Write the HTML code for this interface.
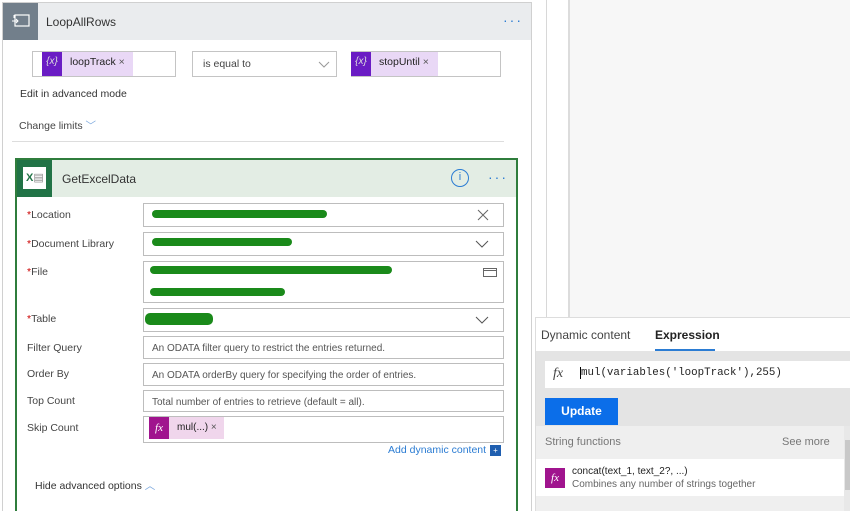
<!DOCTYPE html>
<html><head><style>
*{box-sizing:border-box;margin:0;padding:0}
body{width:850px;height:511px;overflow:hidden;background:#fff;font-family:"Liberation Sans",sans-serif;font-size:11px;color:#333;position:relative}
.a{position:absolute}
.inp{position:absolute;left:143px;width:361px;border:1px solid #bdbdbd;background:#fff;font-size:10px;color:#555;padding:6px 8px}
.lbl{position:absolute;left:27px;font-size:10.5px;color:#444}
.req{color:#c00}
.scr{position:absolute;height:8px;background:#1a8a1a;border-radius:5px}
</style></head><body>
<div class="a" style="left:532px;top:0;width:14px;height:511px;background:#fff"></div>
<div class="a" style="left:546px;top:0;width:1px;height:320px;background:#d8d8d8"></div>
<div class="a" style="left:568px;top:0;width:2px;height:320px;background:#dcdcdc"></div>
<div class="a" style="left:570px;top:0;width:280px;height:318px;background:#f7f7f7"></div>
<div class="a" style="left:2px;top:2px;width:530px;height:509px;border:1px solid #d0d0d0;border-bottom:none;background:#fff"></div>
<div class="a" style="left:3px;top:3px;width:528px;height:37px;background:#eaecee"></div>
<div class="a" style="left:3px;top:3px;width:35px;height:37px;background:#727f8b"></div>
<svg class="a" style="left:11px;top:13px" width="20" height="16"><rect x="4" y="2" width="14" height="11" fill="none" stroke="#fff" stroke-width="1.2"/><path d="M1 8h6M5 6l2 2-2 2M3 2v3" stroke="#fff" fill="none"/></svg>
<div class="a" style="left:46px;top:15px;font-size:12px;color:#333">LoopAllRows</div>
<div class="a" style="left:503px;top:12px;color:#2b7cd3;font-size:14px;letter-spacing:2px">···</div>
<div class="a" style="left:32px;top:51px;width:144px;height:26px;border:1px solid #c4c4c4"></div>
<div class="a" style="left:42px;top:52px;width:20px;height:24px;background:#6a1cc4;color:#ddd;font-size:10px;text-align:center;line-height:20px;font-style:italic">{x}</div>
<div class="a" style="left:62px;top:52px;width:71px;height:24px;background:#e9d8f6;font-size:10.5px;line-height:20px;padding-left:8px;color:#222">loopTrack <span style="color:#555">×</span></div>
<div class="a" style="left:192px;top:51px;width:145px;height:26px;border:1px solid #c4c4c4;font-size:10.5px;padding:6px 10px;color:#444">is equal to<svg style="position:absolute;right:6px;top:9px" width="12" height="8"><path d="M1 1l5 5 5-5" stroke="#999" fill="none"/></svg></div>
<div class="a" style="left:351px;top:51px;width:150px;height:26px;border:1px solid #c4c4c4"></div>
<div class="a" style="left:351px;top:52px;width:20px;height:24px;background:#6a1cc4;color:#ddd;font-size:10px;text-align:center;line-height:20px;font-style:italic">{x}</div>
<div class="a" style="left:371px;top:52px;width:67px;height:24px;background:#e9d8f6;font-size:10.5px;line-height:20px;padding-left:8px;color:#222">stopUntil <span style="color:#555">×</span></div>
<div class="a" style="left:20px;top:88px;font-size:10.5px;color:#333">Edit in advanced mode</div>
<div class="a" style="left:19px;top:118px;font-size:10.5px;color:#444">Change limits <span style="color:#7aa7dd">﹀</span></div>
<div class="a" style="left:12px;top:141px;width:492px;height:1px;background:#ddd"></div>
<div class="a" style="left:15px;top:158px;width:503px;height:353px;border:2px solid #2f7d3c;border-bottom:none;background:#fff"></div>
<div class="a" style="left:17px;top:160px;width:499px;height:37px;background:#e3ede4"></div>
<div class="a" style="left:17px;top:160px;width:35px;height:37px;background:#217346"></div>
<div class="a" style="left:23px;top:167px;width:23px;height:22px;background:#fff;color:#217346;font-size:11px;font-weight:bold;padding:4px 0 0 3px">X<span style="font-weight:normal;color:#888">▤</span></div>
<div class="a" style="left:62px;top:172px;font-size:12px;color:#333">GetExcelData</div>
<div class="a" style="left:451px;top:169px;width:18px;height:18px;border:1.5px solid #2b7cd3;border-radius:50%;color:#2b7cd3;font-size:11px;text-align:center;line-height:15px">i</div>
<div class="a" style="left:488px;top:169px;color:#2b7cd3;font-size:14px;letter-spacing:2px">···</div>
<div class="lbl" style="top:209px"><span class="req">*</span>Location</div>
<div class="inp" style="top:203px;height:24px"><svg style="position:absolute;right:14px;top:5px" width="12" height="12"><path d="M1 1l10 10M11 1L1 11" stroke="#666"/></svg></div>
<div class="scr" style="left:152px;top:210px;width:175px"></div>
<div class="lbl" style="top:238px"><span class="req">*</span>Document Library</div>
<div class="inp" style="top:232px;height:24px"><svg style="position:absolute;right:14px;top:7px" width="14" height="8"><path d="M1 1l6 6 6-6" stroke="#555" fill="none"/></svg></div>
<div class="scr" style="left:152px;top:238px;width:140px"></div>
<div class="lbl" style="top:266px"><span class="req">*</span>File</div>
<div class="inp" style="top:261px;height:42px"><svg style="position:absolute;right:6px;top:5px" width="14" height="10"><rect x="0.5" y="1.5" width="13" height="8" fill="none" stroke="#666"/><path d="M0.5 3.5h13" stroke="#666"/></svg></div>
<div class="scr" style="left:150px;top:266px;width:242px"></div>
<div class="scr" style="left:150px;top:288px;width:135px"></div>
<div class="lbl" style="top:313px"><span class="req">*</span>Table</div>
<div class="inp" style="top:308px;height:24px"><svg style="position:absolute;right:14px;top:7px" width="14" height="8"><path d="M1 1l6 6 6-6" stroke="#555" fill="none"/></svg></div>
<div class="scr" style="left:145px;top:313px;width:68px;height:12px"></div>
<div class="lbl" style="top:342px">Filter Query</div>
<div class="inp" style="top:336px;height:23px">An ODATA filter query to restrict the entries returned.</div>
<div class="lbl" style="top:368px">Order By</div>
<div class="inp" style="top:363px;height:23px">An ODATA orderBy query for specifying the order of entries.</div>
<div class="lbl" style="top:395px">Top Count</div>
<div class="inp" style="top:390px;height:22px">Total number of entries to retrieve (default = all).</div>
<div class="lbl" style="top:422px">Skip Count</div>
<div class="inp" style="top:416px;height:27px;padding:0"></div>
<div class="a" style="left:149px;top:417px;width:20px;height:22px;background:#a0148e;color:#fff;font-family:'Liberation Serif',serif;font-style:italic;font-size:11px;text-align:center;line-height:22px">fx</div>
<div class="a" style="left:169px;top:417px;width:55px;height:22px;background:#f0d6ec;font-size:10px;line-height:22px;padding-left:8px;color:#222">mul(...) <span style="color:#555">×</span></div>
<div class="a" style="left:388px;top:444px;font-size:10.5px;color:#2b7cd3">Add dynamic content</div>
<div class="a" style="left:490px;top:445px;width:11px;height:11px;background:#1f5fb0;color:#fff;font-size:8px;text-align:center;line-height:11px">+</div>
<div class="a" style="left:35px;top:478px;font-size:10.5px;color:#333">Hide advanced options <span style="color:#7aa7dd">︿</span></div>
<div class="a" style="left:535px;top:317px;width:315px;height:194px;background:#fff;border-left:1px solid #ddd;border-top:1px solid #ddd"></div>
<div class="a" style="left:541px;top:328px;font-size:12px;color:#444">Dynamic content</div>
<div class="a" style="left:655px;top:328px;font-size:12px;color:#222;font-weight:bold">Expression</div>
<div class="a" style="left:655px;top:349px;width:60px;height:2px;background:#2b7cd3"></div>
<div class="a" style="left:536px;top:351px;width:314px;height:75px;background:#e4e4e4"></div>
<div class="a" style="left:545px;top:361px;width:305px;height:27px;background:#fff"></div>
<div class="a" style="left:553px;top:366px;font-family:'Liberation Serif',serif;font-style:italic;font-size:14px;color:#444">fx</div>
<div class="a" style="left:580px;top:367px;font-family:'Liberation Mono',monospace;font-size:10.8px;color:#222;border-left:1px solid #000">mul(variables('loopTrack'),255)</div>
<div class="a" style="left:545px;top:398px;width:73px;height:27px;background:#0b6ee9;color:#fff;font-size:12px;font-weight:bold;text-align:center;line-height:27px">Update</div>
<div class="a" style="left:536px;top:426px;width:308px;height:33px;background:#efefef"></div>
<div class="a" style="left:545px;top:436px;font-size:11px;color:#777">String functions</div>
<div class="a" style="left:782px;top:436px;font-size:11px;color:#777">See more</div>
<div class="a" style="left:545px;top:468px;width:20px;height:20px;background:#a0148e;color:#fff;font-family:'Liberation Serif',serif;font-style:italic;font-size:11px;text-align:center;line-height:20px">fx</div>
<div class="a" style="left:572px;top:466px;font-size:10px;color:#222">concat(text_1, text_2?, ...)</div>
<div class="a" style="left:572px;top:479px;font-size:10px;color:#666">Combines any number of strings together</div>
<div class="a" style="left:536px;top:496px;width:308px;height:15px;background:#efefef"></div>
<div class="a" style="left:844px;top:426px;width:6px;height:85px;background:#e8e8e8"></div>
<div class="a" style="left:845px;top:440px;width:5px;height:50px;background:#c8c8c8"></div>
</body></html>
